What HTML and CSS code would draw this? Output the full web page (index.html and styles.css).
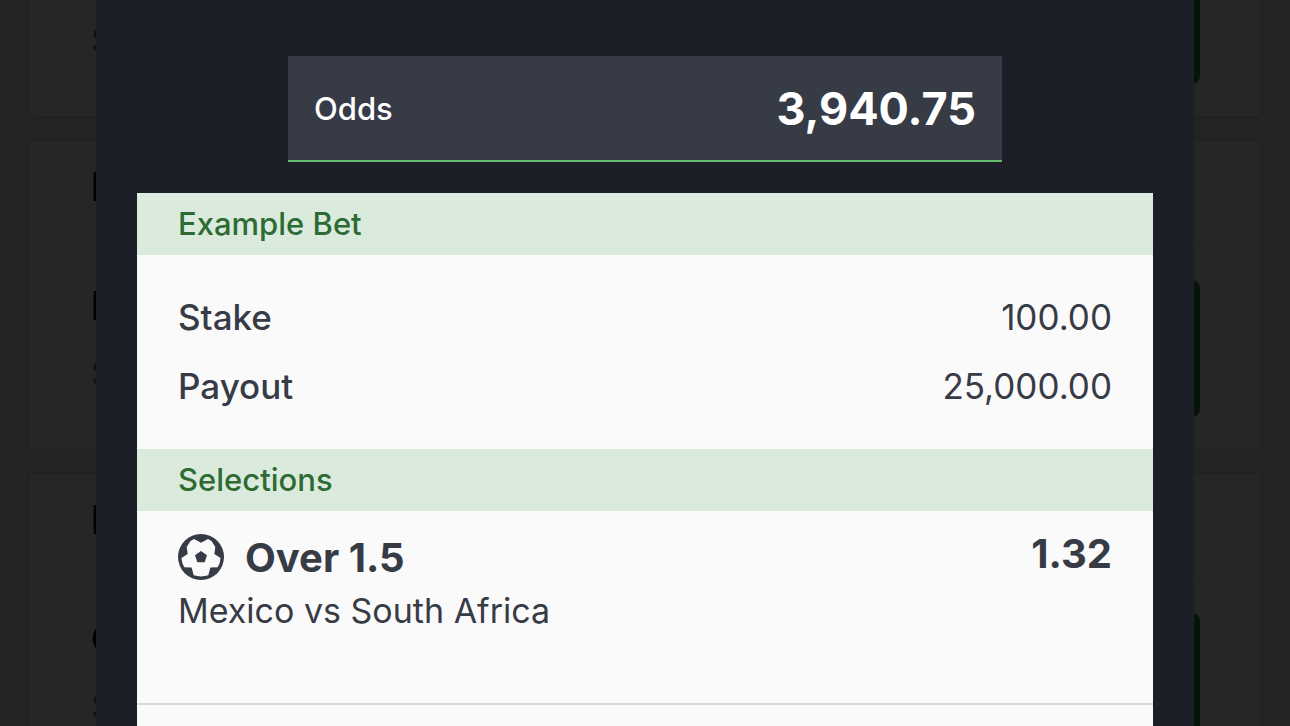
FILE: index.html
```html
<!DOCTYPE html>
<html lang="en">
<head>
    <meta charset="UTF-8" />
    <meta name="viewport" content="width=device-width, initial-scale=1" />
    <title>Example Bet</title>
    <link rel="stylesheet" href="styles.css">
</head>
<body>

    <!-- Bet cards behind the modal -->
    <div class="cards" aria-hidden="true">
        <div class="card">
            <div class="card-title"></div>
            <div class="card-body">
                <div class="card-info"><strong></strong><span>S</span></div>
                <button class="card-btn" type="button" tabindex="-1"></button>
            </div>
        </div>
        <div class="card">
            <div class="card-title">E</div>
            <div class="card-body">
                <div class="card-info"><strong>E</strong><span>S</span></div>
                <button class="card-btn" type="button" tabindex="-1"></button>
            </div>
        </div>
        <div class="card">
            <div class="card-title">E</div>
            <div class="card-body">
                <div class="card-info"><strong>C</strong><span>S</span></div>
                <button class="card-btn" type="button" tabindex="-1"></button>
            </div>
        </div>
    </div>

    <div class="overlay">
        <main class="modal" role="dialog" aria-label="Example Bet">
            <div class="odds">
                <span class="odds-label">Odds</span>
                <span class="odds-value">3,940.75</span>
            </div>

            <div class="slip">
                <h2>Example Bet</h2>
                <dl class="totals">
                    <div class="total-row">
                        <dt>Stake</dt>
                        <dd>100.00</dd>
                    </div>
                    <div class="total-row">
                        <dt>Payout</dt>
                        <dd>25,000.00</dd>
                    </div>
                </dl>

                <h2>Selections</h2>
                <ul class="selections">
                    <li class="selection">
                        <div class="pick">
                            <svg class="ball" viewBox="0 0 46 46" aria-hidden="true">
                                <circle cx="23" cy="23" r="23" fill="#373b46" />
                                <path fill="#fafafa" d="M12.500 7 L16 5 L23 8.800 L30 5 L33.500 7 L37.300 13 L36.300 20 L42.500 24 Q42.300 29.500 39.700 33.200 L32.400 33.500 L30.300 41.300 Q23 43.600 15.700 41.300 L13.600 33.500 L6.300 33.200 Q3.700 29.500 3.500 24 L9.700 20 L8.700 13 Z" />
                                <path fill="#373b46" d="M23 17 L29 21.300 L26.700 28.200 H19.300 L17 21.300 Z" />
                            </svg>
                            <span class="pick-name">Over 1.5</span>
                            <span class="pick-odds">1.32</span>
                        </div>
                        <p class="match">Mexico vs South Africa</p>
                    </li>
                    <li class="selection"></li>
                </ul>
            </div>
        </main>
    </div>

</body>
</html>
```

FILE: styles.css
```css
* {
    box-sizing: border-box;
}
body {
    margin: 0;
    height: 100vh;
    overflow: hidden;
    font-family: Inter, "Liberation Sans", sans-serif;
    background: #f2f2f2;
    color: #373b46;
}

/* background cards */
.cards {
    display: flex;
    flex-direction: column;
    gap: 25px;
    padding: 0 29px;
    margin-top: -192px;
}
.card {
    background: #fff;
    border-radius: 4px;
    box-shadow: 0 0 8px rgba(0,0,0,0.2);
    padding: 0 61px 0 62px;
    color: #000;
}
.card-title {
    height: 107px;
    line-height: 92px;
    font-size: 40px;
    font-weight: bold;
    border-bottom: 1px solid #ddd;
}
.card-body {
    display: flex;
    justify-content: space-between;
    padding: 32px 0;
}
.card-info {
    display: flex;
    flex-direction: column;
}
.card-info strong {
    height: 52px;
    font-size: 40px;
    line-height: 52px;
}
.card-info span {
    font-size: 34px;
    line-height: 82px;
    color: #777;
}
.card-btn {
    width: 240px;
    height: 137px;
    border: none;
    border-radius: 8px;
    background: #2a8a3a;
}

/* modal */
.overlay {
    position: fixed;
    inset: 0;
    overflow: hidden;
    padding: 0 96px;
    background: rgba(0,0,0,0.85);
}
.modal {
    min-height: 100%;
    padding: 56px 41px 0;
    background: #1c1f27;
}
.odds {
    display: flex;
    justify-content: space-between;
    align-items: center;
    width: 65vw;
    max-width: 714px;
    height: 106px;
    margin: 0 auto 31px;
    padding: 0 26px;
    background: #373b46;
    border-bottom: 2px solid #66bb6a;
    color: #fff;
}
.odds-label {
    font-size: 31px;
    font-weight: 500;
}
.odds-value {
    font-size: 45px;
    font-weight: bold;
}
.slip {
    background: #fafafa;
}
h2 {
    margin: 0;
    padding: 0 41px;
    font-size: 31px;
    font-weight: 500;
    line-height: 62px;
    background: #daebdd;
    color: #2e6b34;
}
.totals {
    margin: 0;
    padding: 28px 41px;
}
.total-row {
    display: flex;
    justify-content: space-between;
    font-size: 35px;
    line-height: 69px;
}
.total-row dt {
    font-weight: 500;
}
.total-row dd {
    margin: 0;
}
.selections {
    list-style: none;
    margin: 0;
    padding: 0;
}
.selection {
    height: 194px;
    padding: 22px 41px;
    border-bottom: 2px solid #d9d9db;
}
.pick {
    display: flex;
    align-items: center;
    height: 48px;
    font-size: 40px;
    font-weight: bold;
}
.ball {
    width: 46px;
    height: 46px;
    margin-right: 21px;
}
.pick-odds {
    align-self: flex-start;
    margin-left: auto;
    line-height: 42px;
}
.match {
    margin: 0;
    font-size: 34px;
    line-height: 60px;
}
```
